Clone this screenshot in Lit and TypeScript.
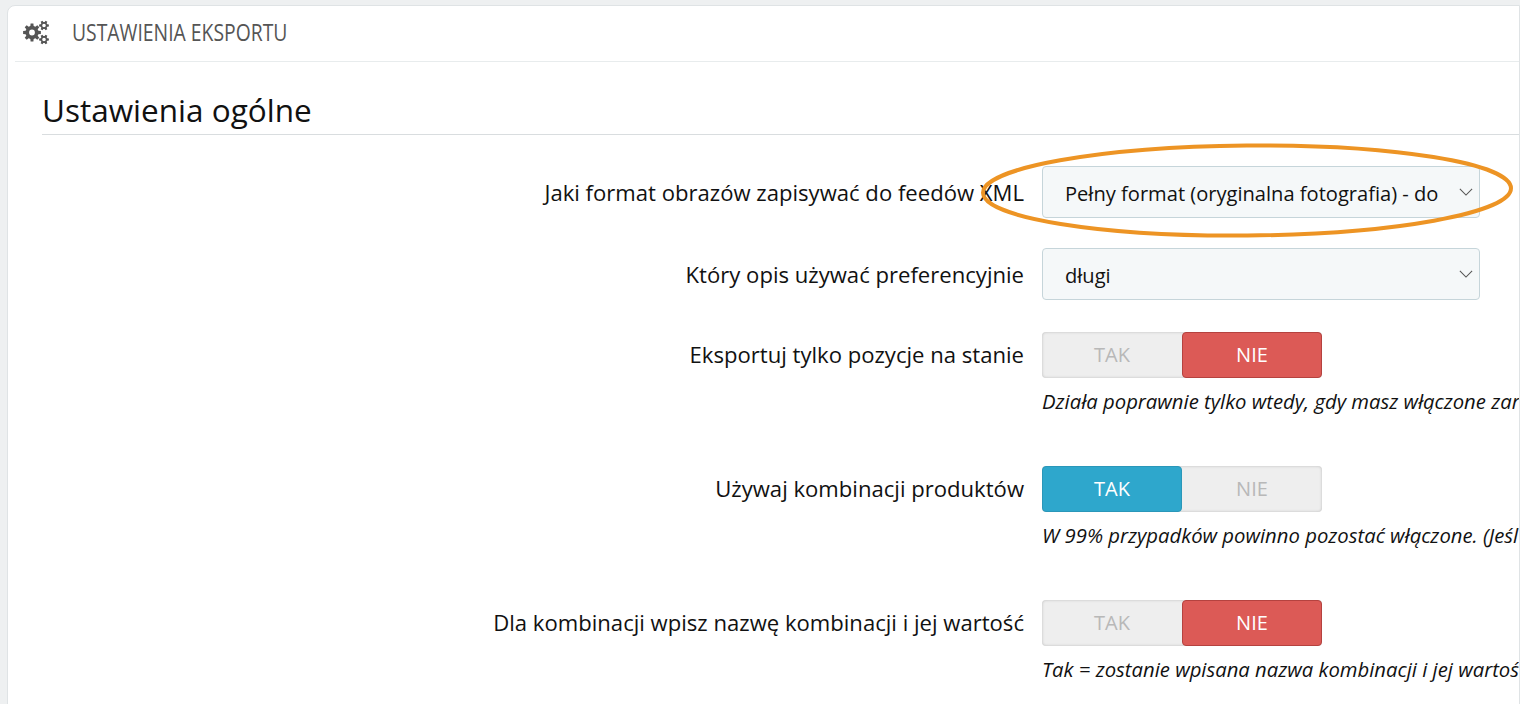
import { LitElement, html, css, svg } from 'lit';
import { customElement } from 'lit/decorators.js';

// toothed outline with a round hole, filled evenodd
function gear(cx: number, cy: number, outer: number, inner: number, hole: number, teeth: number, turn = 0) {
  const pts: string[] = [];
  const step = (Math.PI * 2) / teeth;
  for (let i = 0; i < teeth; i++) {
    const a = turn + i * step;
    const at = (r: number, t: number) =>
      `${(cx + r * Math.cos(a + t * step)).toFixed(2)} ${(cy + r * Math.sin(a + t * step)).toFixed(2)}`;
    pts.push(at(inner, -0.32), at(outer, -0.2), at(outer, 0.2), at(inner, 0.32));
  }
  const ring = `M${cx - hole} ${cy}a${hole} ${hole} 0 1 0 ${hole * 2} 0a${hole} ${hole} 0 1 0 ${-hole * 2} 0Z`;
  return `M${pts.join('L')}Z${ring}`;
}

const chevron = html`<svg class="chevron" viewBox="0 0 16 9" fill="none" stroke="#555" stroke-width="1.2">
  <path d="M1 1l7 7 7-7"></path>
</svg>`;

@customElement('app-root')
export class AppRoot extends LitElement {
  static override styles = css`
    :host {
      display: block;
      position: relative;
      width: 1520px;
      height: 704px;
      overflow: hidden;
      background: #eef0f1;
      font-family: 'Open Sans', sans-serif;
      color: #111;
    }

    .panel {
      margin: 5px 0 0 7px;
      height: 730px;
      box-sizing: border-box;
      padding: 0 0 0 7px;
      background: #fff;
      border: 1px solid #dfe3e5;
      border-radius: 8px 0 0 0;
      overflow: hidden;
    }

    .panel-heading {
      display: flex;
      align-items: center;
      gap: 22px;
      height: 56px;
      box-sizing: border-box;
      padding: 0 0 4px 7px;
      border-bottom: 1px solid #e8eced;
      color: #555;
    }

    .panel-heading svg {
      width: 28px;
      height: 28px;
      flex: none;
    }

    .panel-heading span {
      font-size: 24px;
      text-transform: uppercase;
      white-space: nowrap;
      transform: scaleX(0.806);
      transform-origin: left center;
    }

    .body {
      padding: 0 0 0 27px;
    }

    h2 {
      margin: 0 0 31px;
      height: 73px;
      line-height: 96px;
      font-size: 31.5px;
      font-weight: 400;
      color: #111;
      border-bottom: 1px solid #d9dddf;
      box-sizing: border-box;
    }

    .row {
      display: grid;
      grid-template-columns: 982px 1fr;
      column-gap: 18px;
      margin-bottom: 30px;
    }

    .row > label {
      height: 52px;
      text-align: right;
      font-size: 22.1px;
      line-height: 53px;
      white-space: nowrap;
    }

    .row.toggle > label {
      height: 46px;
      line-height: 44px;
    }

    .row.tall {
      margin-bottom: 32px;
    }

    .control {
      min-width: 0;
    }

    .select {
      display: flex;
      align-items: center;
      justify-content: space-between;
      box-sizing: border-box;
      width: 438px;
      height: 52px;
      padding: 2px 6px 0 22px;
      background: #f5f8f9;
      border: 1px solid #c6d5da;
      border-radius: 4px;
      font-size: 20.1px;
      white-space: nowrap;
      overflow: hidden;
    }

    .chevron {
      width: 14px;
      height: 8px;
      margin: -2px 0 0 12px;
      flex: none;
    }

    .switch {
      display: flex;
      width: 280px;
      height: 46px;
      border-radius: 4px;
      background: #eeeeee;
      box-shadow: inset 0 0 3px rgba(0, 0, 0, 0.22);
      font-size: 20px;
      color: #b8b8b8;
    }

    .switch span {
      flex: none;
      width: 140px;
      display: flex;
      align-items: center;
      justify-content: center;
      padding-bottom: 1px;
      border-radius: 4px;
      box-sizing: border-box;
    }

    .switch .no {
      background: #dc5a56;
      border: 1px solid #b5423f;
      color: #fff;
    }

    .switch .yes {
      background: #2ea7cc;
      border: 1px solid #2a97b9;
      color: #fff;
    }

    .hint {
      margin-top: 9px;
      margin-bottom: 21px;
      font-size: 20.3px;
      line-height: 28px;
      font-style: italic;
      white-space: nowrap;
    }

    .marker {
      position: absolute;
      left: 0;
      top: 0;
      width: 1520px;
      height: 704px;
      pointer-events: none;
    }
  `;

  private renderSwitch(on: boolean) {
    return html`<div class="switch">
      <span class=${on ? 'yes' : ''}>TAK</span>
      <span class=${on ? '' : 'no'}>NIE</span>
    </div>`;
  }

  override render() {
    return html`
      <div class="panel">
        <div class="panel-heading">
          <svg viewBox="0 0 28 28" fill="#555">
            ${svg`<path fill-rule="evenodd" d=${gear(10, 14.5, 9, 6.6, 2.9, 8)}></path>
            <path fill-rule="evenodd" d=${gear(22, 7.5, 5, 3.5, 1.8, 6)}></path>
            <path fill-rule="evenodd" d=${gear(22, 21.5, 5, 3.5, 1.8, 6)}></path>`}
          </svg>
          <span>Ustawienia eksportu</span>
        </div>
        <div class="body">
          <h2>Ustawienia ogólne</h2>
          <div class="row">
            <label>Jaki format obrazów zapisywać do feedów XML</label>
            <div class="control">
              <div class="select"><span>Pełny format (oryginalna fotografia) - do</span>${chevron}</div>
            </div>
          </div>
          <div class="row tall">
            <label>Który opis używać preferencyjnie</label>
            <div class="control">
              <div class="select"><span>długi</span>${chevron}</div>
            </div>
          </div>
          <div class="row toggle">
            <label>Eksportuj tylko pozycje na stanie</label>
            <div class="control">
              ${this.renderSwitch(false)}
              <div class="hint">Działa poprawnie tylko wtedy, gdy masz włączone zar</div>
            </div>
          </div>
          <div class="row toggle">
            <label>Używaj kombinacji produktów</label>
            <div class="control">
              ${this.renderSwitch(true)}
              <div class="hint">W 99% przypadków powinno pozostać włączone. (Jeśl</div>
            </div>
          </div>
          <div class="row toggle">
            <label>Dla kombinacji wpisz nazwę kombinacji i jej wartość</label>
            <div class="control">
              ${this.renderSwitch(false)}
              <div class="hint">Tak = zostanie wpisana nazwa kombinacji i jej wartoś</div>
            </div>
          </div>
        </div>
      </div>
      <svg class="marker" viewBox="0 0 1520 704" fill="none">
        <ellipse cx="1247" cy="190.5" rx="264" ry="45" stroke="#ed9424" stroke-width="4"
          transform="rotate(-0.5 1247 190.5)"></ellipse>
      </svg>
    `;
  }
}

declare global {
  interface HTMLElementTagNameMap {
    'app-root': AppRoot;
  }
}
